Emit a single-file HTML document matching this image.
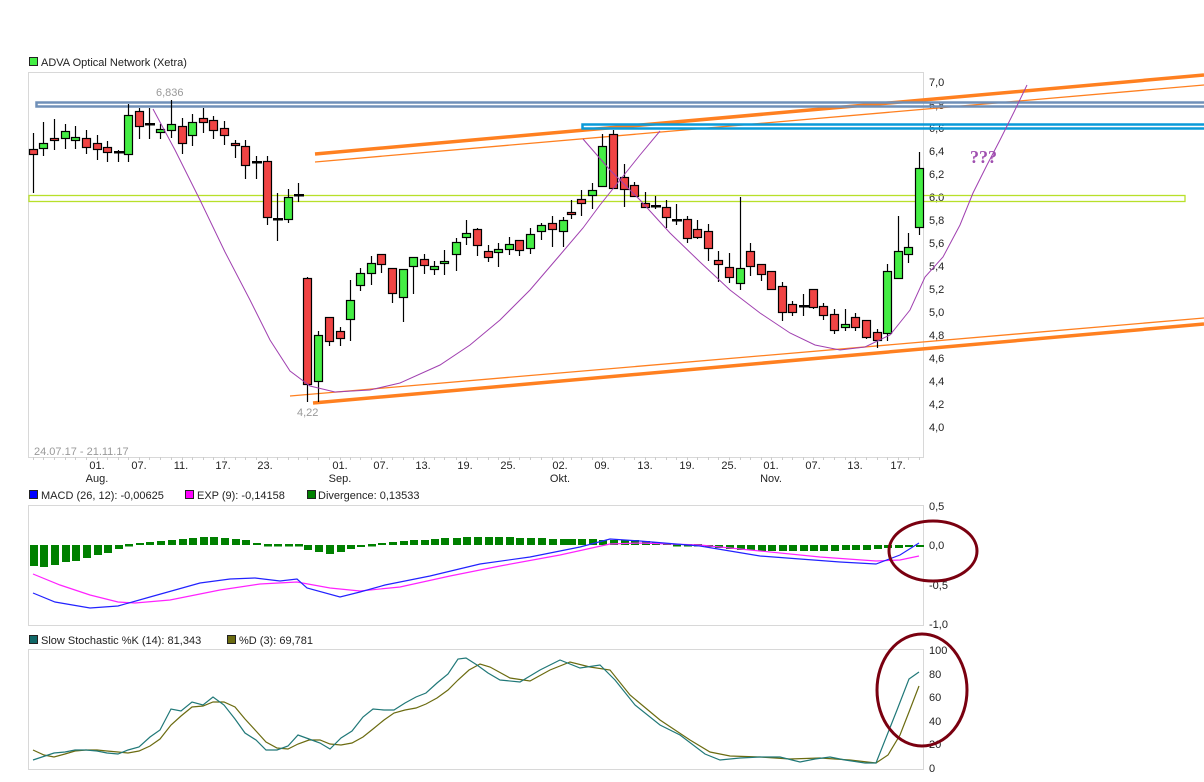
<!DOCTYPE html>
<html><head><meta charset="utf-8"><style>
body{margin:0;background:#fff;width:1204px;height:777px;overflow:hidden;font-family:"Liberation Sans",sans-serif}
svg text{font-family:"Liberation Sans",sans-serif;font-size:11px;fill:#222}
</style></head><body>
<svg id="s" width="1204" height="777" xmlns="http://www.w3.org/2000/svg">
<rect x="0" y="0" width="1204" height="777" fill="#fff"/>
<!-- panels -->
<rect x="28.5" y="72.5" width="895" height="385" fill="none" stroke="#d8d8d8"/>
<rect x="28.5" y="505.5" width="895" height="120" fill="none" stroke="#d8d8d8"/>
<rect x="28.5" y="649.5" width="895" height="120" fill="none" stroke="#d8d8d8"/>
<g id="ticks"></g>
<!-- legends -->
<rect x="29.5" y="57.5" width="8" height="8" fill="#44ee44" stroke="#222"/>
<text x="41" y="66">ADVA Optical Network (Xetra)</text>
<rect x="29.5" y="490.5" width="8" height="8" fill="#0000ff" stroke="#222"/>
<text x="41" y="499">MACD (26, 12): -0,00625</text>
<rect x="185.5" y="490.5" width="8" height="8" fill="#ff00ff" stroke="#222"/>
<text x="197" y="499">EXP (9): -0,14158</text>
<rect x="307.5" y="490.5" width="8" height="8" fill="#008000" stroke="#222"/>
<text x="318" y="499">Divergence: 0,13533</text>
<rect x="29.5" y="635.5" width="8" height="8" fill="#106868" stroke="#222"/>
<text x="41" y="644">Slow Stochastic %K (14): 81,343</text>
<rect x="227.5" y="635.5" width="8" height="8" fill="#6b6b10" stroke="#222"/>
<text x="239" y="644">%D (3): 69,781</text>
<!-- axis labels -->
<g id="ylab"></g>
<g id="xlab"></g>
<text x="34" y="455" style="fill:#999">24.07.17 - 21.11.17</text>
<text x="156" y="96" style="fill:#999">6,836</text>
<text x="297" y="416" style="fill:#999">4,22</text>
<!-- horizontal zones -->
<rect x="29" y="195.5" width="1156" height="6" fill="none" stroke="#b8e02a" stroke-width="1.3"/>
<!-- orange lines -->
<line x1="315" y1="154" x2="1204" y2="75" stroke="#ff8020" stroke-width="3.5"/>
<line x1="315" y1="162" x2="1204" y2="85" stroke="#ff8020" stroke-width="1.3"/>
<line x1="313" y1="403" x2="1204" y2="324" stroke="#ff8020" stroke-width="3.5"/>
<line x1="290" y1="396" x2="1204" y2="318" stroke="#ff8020" stroke-width="1.3"/>
<rect x="36.5" y="102.5" width="1180" height="4" fill="none" stroke="#7090b8" stroke-width="2.5"/>
<rect x="582.5" y="124.5" width="640" height="4" fill="none" stroke="#0a9ad8" stroke-width="2.5"/>
<g id="candles"></g>
<polyline fill="none" stroke="#a040b0" stroke-width="1" points="153,109 175,150 200,200 225,252 250,300 270,340 290,371 310,386 335,392 370,390 400,383 440,365 470,345 500,320 530,290 560,255 583,228 600,205 620,180 640,155 660,131"/>
<polyline fill="none" stroke="#a040b0" stroke-width="1" points="583,139 610,170 640,200 670,233 700,262 730,290 760,313 790,333 815,345 840,350 865,347 890,335 910,310 925,277 943,257 960,225 973,193 987,165 1000,140 1014,112 1027,85"/>
<text x="970" y="163" style="font-family:'Liberation Serif',serif;font-size:18px;font-weight:bold;fill:#a050b0">???</text>
<g id="macd"></g>
<g id="stoch"></g>
<ellipse cx="933" cy="551" rx="44" ry="30" fill="none" stroke="#7a0010" stroke-width="3"/>
<ellipse cx="922" cy="690" rx="45" ry="56" fill="none" stroke="#7a0010" stroke-width="3"/>
</svg>
<script>
var NS="http://www.w3.org/2000/svg";
function el(p,t,a,txt){var e=document.createElementNS(NS,t);for(var k in a)e.setAttribute(k,a[k]);if(txt!=null)e.textContent=txt;document.getElementById(p).appendChild(e);return e;}
// y labels
var yl=["7,0","6,8","6,6","6,4","6,2","6,0","5,8","5,6","5,4","5,2","5,0","4,8","4,6","4,4","4,2","4,0"];
for(var i=0;i<yl.length;i++)el("ylab","text",{x:929,y:86+i*23},yl[i]);
[["0,5",510],["0,0",549],["-0,5",589],["-1,0",628]].forEach(function(a){el("ylab","text",{x:929,y:a[1]},a[0]);});
[["100",654],["80",678],["60",701],["40",725],["20",748],["0",772]].forEach(function(a){el("ylab","text",{x:929,y:a[1]},a[0]);});
var xl=[["01.",97],["07.",139],["11.",181],["17.",223],["23.",265],["01.",340],["07.",381],["13.",423],["19.",465],["25.",508],["02.",560],["09.",602],["13.",645],["19.",687],["25.",729],["01.",771],["07.",813],["13.",855],["17.",898]];
xl.forEach(function(a){el("xlab","text",{x:a[1],y:469,"text-anchor":"middle"},a[0]);});
[["Aug.",97],["Sep.",340],["Okt.",560],["Nov.",771]].forEach(function(a){el("xlab","text",{x:a[1],y:482,"text-anchor":"middle"},a[0]);});
// candles: x, o, c, h, l  (pixel y)  color by g/r
var C=[
[33,149,154,133,193,'r'],[43,148,143,122,156,'g'],[54,138,140,119,150,'r'],[65,138,131,124,149,'g'],[75,140,137,126,149,'g'],[86,138,147,130,154,'r'],[97,143,149,135,160,'r'],[107,147,152,141,162,'r'],[118,152,152,150,162,'d'],[128,154,115,104,162,'g'],[139,111,126,108,139,'r'],[149,124,124,108,139,'d'],[160,132,129,124,139,'g'],[171,130,124,100,138,'g'],[182,126,143,118,154,'r'],[192,135,122,114,146,'g'],[203,118,122,108,133,'r'],[213,120,130,116,139,'r'],[224,128,135,121,145,'r'],[235,143,144,140,158,'r'],[245,146,165,140,179,'r'],[256,162,162,156,179,'d'],[267,161,217,156,225,'r'],[277,219,219,193,241,'d'],[288,219,197,189,223,'g'],[298,195,195,183,202,'d'],
[307,278,384,277,402,'r'],[318,381,335,331,402,'g'],[329,317,341,317,346,'r'],[340,331,338,327,346,'r'],[350,319,300,280,341,'g'],[360,285,273,268,291,'g'],[371,273,263,256,285,'g'],[381,254,264,254,273,'r'],[392,268,293,268,303,'r'],[403,297,269,269,322,'g'],[413,266,257,257,294,'g'],[424,259,265,254,274,'r'],[434,269,266,261,275,'g'],[444,263,261,250,275,'g'],[456,254,242,238,271,'g'],[466,237,233,220,245,'g'],[477,229,245,228,256,'r'],[488,251,257,245,262,'r'],[498,252,249,243,267,'g'],[509,249,244,237,255,'g'],[519,240,250,240,256,'r'],[530,248,234,228,254,'g'],[541,231,225,223,240,'g'],[552,223,229,216,247,'r'],[563,231,220,217,247,'g'],[571,212,214,200,219,'r'],
[581,199,203,190,216,'r'],[592,195,190,183,209,'g'],[602,186,146,134,186,'g'],[613,134,188,130,188,'r'],[624,177,189,164,207,'r'],[634,185,196,182,197,'r'],[645,203,207,192,208,'r'],[655,206,206,196,209,'d'],[666,207,217,200,228,'r'],[676,220,220,204,225,'d'],[687,219,238,216,243,'r'],[697,229,237,220,239,'r'],[708,231,248,224,261,'r'],[718,260,264,251,282,'r'],[729,267,277,253,283,'r'],[740,283,268,197,290,'g'],[750,251,266,243,276,'r'],[761,264,274,264,281,'r'],[771,271,289,271,289,'r'],[782,286,312,282,321,'r'],[792,304,312,301,316,'r'],[803,306,306,294,316,'d'],[813,289,307,289,309,'r'],[823,306,315,303,320,'r'],[834,314,330,309,334,'r'],[845,327,324,309,331,'g'],[855,317,327,313,331,'r'],[866,320,337,320,339,'r'],[877,332,340,329,348,'r'],[887,333,271,264,341,'g'],[898,278,251,216,278,'g'],[908,254,247,233,263,'g'],[919,227,168,152,235,'g']];
C.forEach(function(c){
 var x=c[0];el("candles","line",{x1:x+.5,x2:x+.5,y1:c[3],y2:c[4],stroke:"#000","stroke-width":1.2});
 var t=Math.min(c[1],c[2]),b=Math.max(c[1],c[2]);
 if(c[5]=='d'){el("candles","rect",{x:x-4,y:t-1,width:10,height:2.5,fill:"#000"});}
 else{if(b-t<2)b=t+2;el("candles","rect",{x:x-3.5,y:t+.5,width:8,height:b-t,fill:c[5]=='g'?"#44ee44":"#f04444",stroke:"#000","stroke-width":1.2});}
});
// ticks on x axis
for(var i=0;i<C.length;i++)el("ticks","line",{x1:C[i][0]+.5,x2:C[i][0]+.5,y1:457,y2:460,stroke:"#ccc"});
// MACD histogram
var H=[-21,-22,-20,-17,-16,-13,-10,-8,-4,-1,2,3,4,5,6,7,8,8,7,6,5,2,1,1,1,1,-5,-7,-9,-7,-4,-2,1,2,3,4,5,5,6,7,7,8,8,8,8,8,7,7,7,6,6,6,6,6,5,5,5,5,4,3,2,1,0,-1,-2,-3,-4,-5,-5,-6,-6,-6,-6,-6,-6,-6,-6,-5,-5,-5,-4,-3,-3,-2,-2,-2,4,6,10];
for(var i=0;i<C.length&&i<H.length;i++){var h=H[i];var y0=545;
 if(Math.abs(h)<2){el("macd","rect",{x:C[i][0]-3,y:y0-1,width:8,height:2.5,fill:"#008000"});}
 else el("macd","rect",{x:C[i][0]-3,y:h>0?y0-h:y0,width:8,height:Math.abs(h),fill:"#008000"});}
el("macd","polyline",{fill:"none",stroke:"#ff22ff","stroke-width":1.2,points:"33,574 60,585 90,595 118,602 135,603 170,600 220,590 260,584 297,582 330,588 360,591 400,587 450,576 500,566 560,555 610,544 640,543 700,545 760,551 820,557 876,561 900,560 919,556"});
el("macd","polyline",{fill:"none",stroke:"#2222ff","stroke-width":1.2,points:"33,593 55,602 90,608 118,606 150,597 200,583 230,579 255,578 280,581 297,579 307,588 340,597 360,592 385,585 430,576 480,564 530,557 580,547 610,539 640,541 700,546 760,556 800,559 840,562 876,564 900,555 919,543"});
// stochastic
el("stoch","polyline",{fill:"none",stroke:"#6b6b10","stroke-width":1.2,points:"33,750 44,755 54,757 65,754 75,751 86,750 97,750 107,751 118,752 128,753 139,751 150,746 160,739 171,725 181,716 192,707 203,706 213,702 224,702 235,707 245,719 256,731 266,742 277,748 288,749 298,744 309,740 320,740 330,744 341,745 352,743 363,737 373,729 384,720 394,713 405,710 416,708 426,704 437,698 448,690 458,680 469,670 480,664 490,667 510,678 530,681 550,670 570,662 590,667 610,670 630,695 660,720 690,740 710,752 730,756 760,757 790,759 820,758 850,760 876,763 888,755 900,735 909,712 919,686"});
el("stoch","polyline",{fill:"none",stroke:"#207878","stroke-width":1.2,points:"33,760 54,753 65,752 75,750 86,750 97,751 107,753 118,754 128,750 139,747 150,737 160,730 171,709 181,711 192,702 203,705 213,697 224,705 235,719 245,733 256,740 266,750 277,750 288,746 298,735 309,739 320,743 330,749 341,738 352,731 363,717 373,709 384,710 394,710 405,703 416,697 426,693 437,683 448,674 458,659 466,658 477,665 488,673 500,680 520,682 540,670 560,660 580,668 600,665 615,680 635,705 660,725 680,735 705,754 720,760 740,758 760,757 780,757 800,762 815,759 830,757 845,760 865,763 876,763 897,710 909,679 919,672"});
</script>
</body></html>
